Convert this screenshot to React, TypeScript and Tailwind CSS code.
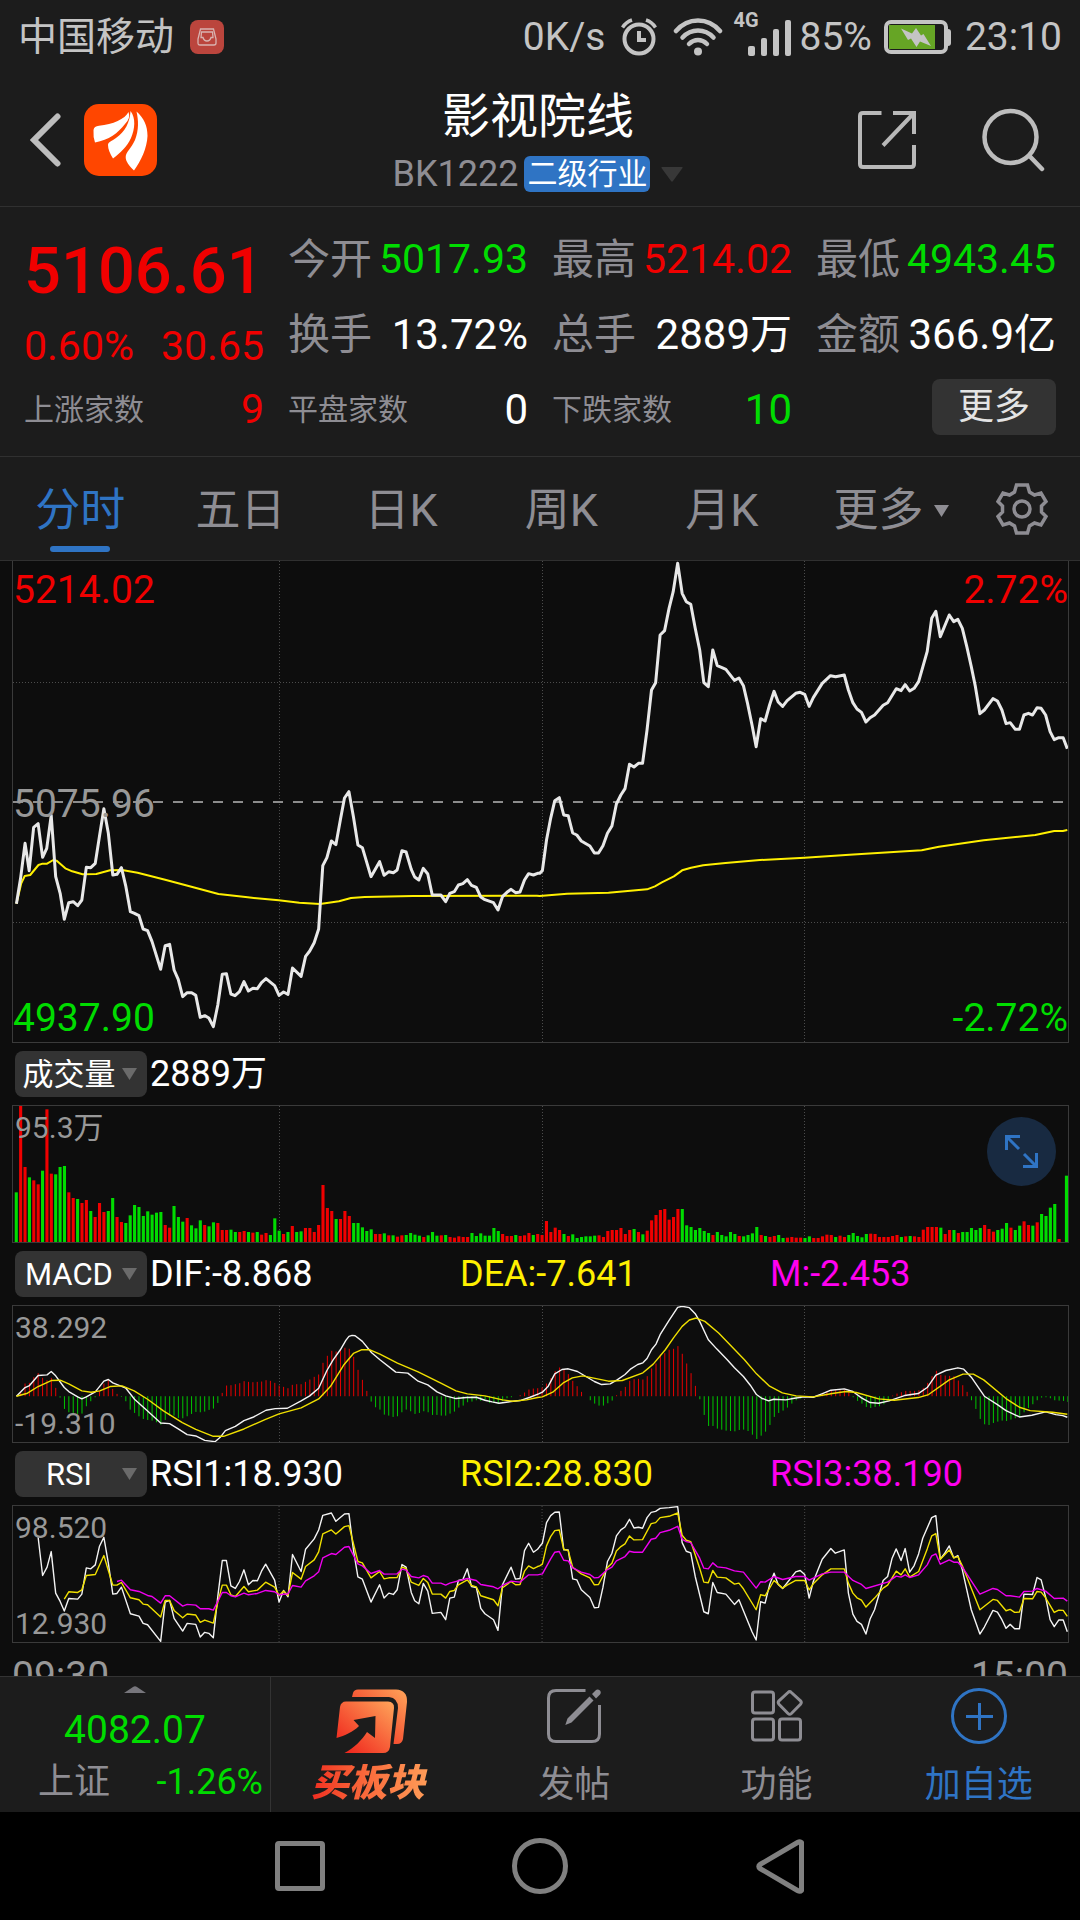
import type { ReactNode } from 'react'

// x distance between two one-minute samples, and the width of the morning session
const STEP = 12.73
const FIRST = 48
const SESSION = 1568
const GRID_X = [811, 1575, 2338]

// Morning and afternoon points are kept apart, the afternoon starts again at x = 0
function series(morning: string, afternoon: string) {
  const shifted = afternoon.split(' ').map((p) => {
    const [x, y] = p.split(',').map(Number)
    return `${x + SESSION},${y}`
  })
  return `${morning} ${shifted.join(' ')}`
}

const PRICE = series(
  '48,1061 60,985 73,880 85,962 98,832 111,821 124,922 136,895 149,796 162,980 175,1030 187,1108 200,1058 213,1055 226,1067 238,1050 251,952 264,953 277,940 289,860 302,776 315,850 328,975 340,973 353,953 366,1010 379,1085 391,1090 404,1097 416,1137 429,1142 442,1175 467,1258 480,1187 493,1183 506,1260 518,1288 531,1340 544,1328 557,1328 569,1336 582,1402 595,1397 607,1404 620,1430 633,1365 646,1273 658,1271 671,1332 683,1337 696,1325 709,1295 722,1323 735,1315 748,1316 760,1298 773,1286 798,1307 811,1336 824,1326 837,1333 850,1254 875,1279 888,1219 900,1203 913,1178 926,1137 938,947 950,923 963,873 976,884 989,810 1001,744 1014,725 1027,800 1040,885 1053,893 1078,980 1103,935 1116,976 1130,965 1143,968 1154,960 1168,902 1180,906 1195,958 1205,981 1217,990 1230,955 1243,972 1256,1035 1281,1035 1295,1055 1307,1030 1320,1025 1332,1005 1345,1001 1358,989 1370,1006 1384,1012 1397,1041 1409,1049 1434,1058 1447,1080 1460,1040 1473,1027 1485,1018 1498,1028 1511,1026 1524,990 1536,971 1550,975 1562,970',
  '0,970 8,962 20,870 32,805 44,752 57,743 70,795 83,797 96,849 108,855 121,873 146,888 159,909 171,909 184,887 197,850 210,828 223,762 236,735 248,716 261,643 274,651 287,640 299,640 312,540 325,420 337,398 350,255 363,242 376,175 388,125 401,40 414,130 426,155 439,163 452,235 465,300 477,398 490,410 503,300 516,347 528,352 541,358 566,391 579,384 592,407 604,460 617,525 629,590 642,506 655,513 668,465 681,424 693,456 706,469 719,452 744,430 757,427 770,433 783,469 795,443 821,400 845,377 860,380 885,375 897,420 910,458 922,477 935,487 948,516 960,503 973,495 998,466 1011,458 1036,416 1050,422 1062,404 1075,423 1088,415 1101,395 1126,304 1139,205 1151,184 1164,260 1190,195 1203,215 1215,208 1228,235 1241,290 1254,350 1266,410 1279,491 1292,480 1317,446 1330,453 1343,480 1355,521 1367,518 1382,538 1394,538 1407,495 1420,490 1432,495 1445,473 1457,475 1470,495 1483,545 1495,569 1508,563 1521,563 1533,596'
)

const AVERAGE = series(
  '48,1061 62,1000 72,978 88,975 112,945 124,941 137,941 155,930 165,932 190,955 210,964 240,973 280,972 320,961 355,960 400,968 480,989 540,1006 635,1032 720,1042 810,1051 870,1058 930,1062 985,1054 1020,1044 1060,1041 1200,1038 1560,1037',
  '0,1038 80,1031 200,1028 312,1018 335,1009 355,997 390,979 414,961 440,953 475,946 540,939 640,930 770,923 900,914 1110,901 1160,890 1290,871 1440,855 1495,843 1520,843 1533,840'
)

// r = up minute, g = down minute
const VOLUME =
  'g149 r408 r225 g194 r185 r173 g214 r398 r205 g203 g225 g228 r149 r132 g129 r117 r126 g93 r75 r117 r90 g93 g132 r75 r60 g57 g80 g111 g105 g78 g92 g82 g88 g90 r51 r43 g108 g75 g61 r72 g50 g41 g65 r51 g47 g59 r57 r36 r36 g37 g30 r30 r33 g30 r28 g30 r22 r27 g21 g71 g34 r24 g30 r48 g30 g32 r42 r42 r30 r51 r171 r102 r93 g69 r69 r93 r78 g57 g57 g44 g33 g38 r24 r24 g26 r20 g20 r16 r20 g21 g27 g22 g19 r15 g20 g30 g19 r20 g21 r15 r13 r17 r15 r15 g27 g18 g26 g19 g19 g42 g33 r24 r18 r18 g21 r18 r20 r27 g21 r24 ' +
  'r21 r63 r30 r43 r36 g24 r18 g23 g12 g15 g17 g17 g19 r20 r15 r33 r36 r36 r42 r24 r36 g39 r30 g23 r34 r65 r81 r96 r99 r67 r75 r99 g99 g50 g45 g36 g42 g33 g27 r21 g30 g21 g17 g30 g24 r18 g17 g21 g26 g45 r21 g18 r15 r18 g21 g12 r13 r15 r13 r13 g12 g17 r12 r12 r17 r22 r21 g15 r19 r15 g21 g27 g18 g14 g24 r25 r24 r15 r15 r15 r18 r21 g15 r17 g18 r17 r15 r37 r45 r45 r45 g43 r24 r36 g36 r27 g30 g30 g42 g36 g42 r51 r39 r31 g36 g40 g57 r43 g36 g49 r62 r51 g49 r59 g84 g78 g103 g114 r9 g0 g199'

const MACD_BARS = [
  0, 12, 38, 40, 57, 69, 55, 48, 55, 25, -4, -38, -48, -50, -53, -52, -30, -15, -3, 15, 38, 48, 22, 7, -2, -15, -40, -50, -60, -68,
  -71, -73, -78, -85, -71, -58, -58, -65, -66, -60, -53, -47, -48, -46, -41, -37, -20, 10, 32, 33, 36, 39, 45, 43, 42, 43, 44, 48, 46, 40,
  32, 28, 24, 34, 36, 36, 43, 50, 58, 65, 100, 121, 136, 134, 138, 145, 142, 118, 79, 49, 16, -16, -33, -40, -55, -58, -62, -60, -48, -40,
  -45, -53, -50, -45, -48, -56, -56, -58, -58, -52, -46, -34, -28, -18, -16, -12, -14, -12, -20, -20, -23, -15, -6, -3, 0, 3, 11, 20, 23, 24,
  26, 38, 54, 75, 86, 80, 66, 46, 30, 13, 0, -12, -22, -28, -28, -21, -13, 3, 16, 28, 46, 51, 52, 50, 60, 83, 98, 125, 129, 139,
  142, 150, 127, 98, 69, 31, -9, -56, -89, -89, -97, -100, -103, -104, -105, -101, -100, -104, -115, -128, -118, -106, -86, -62, -50, -43, -34, -22, -12, -7,
  -4, -3, -3, 4, 8, 13, 18, 18, 19, 20, 14, -3, -14, -22, -32, -35, -32, -30, -24, -15, 2, 8, 12, 16, 16, 16, 18, 25, 40, 60,
  76, 64, 62, 61, 60, 47, 33, 13, -12, -38, -68, -84, -86, -80, -76, -73, -74, -70, -66, -60, -48, -35, -24, -12, -4, -3, -6, -12, -13, -14, -17,
]

const DIF = series(
  '48,139 73,113 86,107 111,77 137,75 149,65 162,78 187,113 200,125 226,141 238,147 251,141 277,126 302,94 315,89 328,99 366,115 391,148 429,183 467,219 493,221 518,237 544,254 569,258 595,271 625,275 640,262 655,242 684,229 709,212 735,202 773,181 800,176 835,175 875,153 900,138 926,115 950,62 968,30 989,0 1005,-28 1014,-40 1023,-43 1032,-42 1053,-25 1080,9 1104,30 1150,67 1185,70 1215,94 1243,105 1270,126 1295,138 1325,146 1355,143 1384,142 1409,151 1430,156 1450,160 1485,155 1511,152 1540,142 1565,132',
  '8,127 25,109 44,72 65,59 83,57 110,65 159,95 180,104 205,102 225,90 248,74 265,57 285,44 300,39 312,26 325,0 338,-17 350,-45 376,-88 401,-127 414,-130 435,-126 452,-108 465,-85 490,-30 515,-2 545,30 566,54 592,80 612,106 630,134 645,145 665,153 680,148 715,150 740,145 768,141 795,142 820,132 846,121 885,117 910,125 935,144 960,158 985,160 1015,153 1060,137 1100,131 1126,113 1151,76 1180,62 1215,54 1232,58 1254,82 1292,139 1330,164 1355,182 1394,201 1430,196 1470,186 1500,194 1520,197 1533,202'
)

const DEA = series(
  '48,139 80,130 111,110 149,92 175,91 200,102 238,123 265,127 290,123 320,110 355,108 390,123 429,148 475,183 530,218 569,238 620,259 650,259 709,237 770,209 811,192 875,174 926,147 960,110 1000,44 1027,11 1050,0 1075,0 1104,13 1155,40 1215,66 1281,100 1325,123 1358,132 1409,138 1460,150 1490,154 1530,150 1562,143',
  '8,141 38,127 70,98 95,84 125,78 200,94 240,92 300,69 330,43 365,0 390,-37 414,-70 435,-89 455,-95 480,-85 520,-50 595,30 630,72 668,109 705,129 745,138 795,141 850,131 890,125 920,128 985,147 1030,151 1100,143 1130,134 1190,90 1230,73 1260,73 1290,90 1355,146 1394,172 1425,182 1490,187 1533,193'
)

const RSI1 = series(
  '111,562 124,677 137,652 149,605 162,730 175,755 187,784 200,746 226,748 238,733 251,654 264,657 277,645 289,590 302,562 315,640 328,733 340,731 353,712 379,792 404,799 416,821 429,825 467,875 480,757 493,752 506,806 531,844 544,821 569,824 582,862 595,848 607,851 620,864 633,740 646,632 658,632 671,708 684,716 696,695 709,660 722,705 735,692 748,693 760,664 772,643 798,691 811,757 824,722 837,741 850,614 875,665 888,598 913,567 926,540 938,496 963,489 976,514 1001,492 1014,491 1027,600 1040,681 1053,688 1078,757 1103,705 1116,745 1130,730 1143,734 1154,720 1168,644 1180,652 1195,728 1205,753 1217,762 1230,701 1243,724 1256,791 1281,788 1295,810 1307,745 1320,742 1332,692 1345,689 1358,657 1370,710 1384,713 1397,776 1409,792 1434,810 1447,842 1460,705 1485,652 1498,688 1511,686 1524,602 1536,580 1550,607 1562,598',
  '0,590 8,580 20,518 32,497 44,487 57,486 70,600 83,600 96,687 108,690 121,720 146,743 159,774 171,773 184,712 197,635 210,610 223,558 236,540 248,531 261,508 274,534 287,532 299,535 312,503 324,487 337,484 350,475 376,473 401,470 414,578 426,604 439,609 452,680 477,786 490,792 503,698 516,728 541,733 566,764 579,750 617,846 629,871 642,756 655,760 668,705 681,670 693,704 706,716 744,666 757,662 770,674 783,745 795,695 821,628 846,596 859,610 885,600 897,730 910,793 922,815 935,824 948,853 960,808 973,780 998,692 1011,680 1024,625 1036,597 1050,632 1062,596 1075,667 1088,647 1101,612 1113,565 1139,503 1151,497 1164,628 1177,610 1190,588 1203,624 1215,617 1228,660 1254,780 1279,853 1292,832 1317,782 1330,787 1343,810 1355,836 1367,824 1380,837 1394,837 1407,733 1432,734 1445,683 1457,690 1470,742 1483,810 1495,831 1508,811 1521,811 1533,846'
)

const RSI2 = series(
  '187,748 200,726 226,728 238,720 251,677 277,674 302,617 315,662 328,706 340,706 353,698 379,744 404,750 416,763 429,765 467,802 480,752 493,752 506,782 531,804 544,793 569,796 582,818 595,811 620,820 633,757 646,706 658,706 671,735 684,740 709,710 722,726 748,721 772,697 798,712 811,737 824,724 837,737 850,668 875,688 888,650 913,630 926,606 938,552 963,540 976,552 1001,530 1014,527 1040,635 1053,639 1078,684 1103,665 1116,687 1130,684 1154,683 1168,652 1180,656 1195,697 1217,707 1230,686 1243,698 1256,733 1281,733 1295,745 1307,725 1320,722 1332,705 1358,690 1370,707 1384,711 1397,738 1434,750 1447,768 1460,714 1485,695 1498,705 1511,704 1524,664 1536,648 1550,656 1562,650',
  '0,648 8,643 20,588 32,560 44,542 57,540 70,598 83,602 96,652 121,672 146,684 159,705 171,704 197,653 210,640 223,603 236,590 248,582 261,558 274,570 299,569 324,521 337,518 350,503 376,499 401,489 414,556 426,571 439,575 465,655 477,697 490,699 503,662 516,682 541,684 566,703 579,700 592,717 629,780 642,735 655,738 681,692 706,715 719,706 744,692 770,692 783,720 795,702 821,675 846,657 885,657 897,700 910,730 922,744 935,751 948,772 973,745 998,715 1011,706 1036,664 1050,675 1062,657 1075,682 1101,665 1126,597 1139,558 1151,551 1164,628 1190,600 1203,624 1215,620 1228,648 1279,780 1317,749 1330,752 1355,783 1367,779 1380,788 1394,787 1407,746 1432,747 1445,725 1457,727 1470,744 1495,788 1508,781 1521,782 1533,800'
)

const RSI3 = series(
  '340,695 353,691 379,720 404,725 429,737 442,740 467,760 480,738 493,738 531,769 544,764 569,766 582,777 607,777 620,781 646,728 658,728 671,738 684,741 709,730 722,735 748,731 772,722 798,726 811,735 837,732 850,707 875,712 888,693 913,678 926,666 938,624 963,611 976,614 1001,592 1014,590 1040,642 1053,648 1078,671 1103,662 1116,673 1154,672 1168,658 1180,661 1195,680 1217,684 1230,677 1243,681 1256,700 1281,700 1295,706 1307,700 1358,686 1384,692 1397,704 1434,711 1447,717 1460,707 1485,694 1511,697 1536,675 1562,675',
  '8,672 32,627 44,607 57,605 70,631 83,633 96,654 121,667 146,674 159,684 171,683 197,659 210,652 223,633 248,620 261,604 274,607 299,607 324,568 337,565 350,548 376,541 401,529 414,568 426,575 439,578 465,625 477,655 490,657 503,639 516,651 541,654 566,663 592,667 629,715 642,696 655,697 681,680 706,689 744,680 770,680 783,691 821,672 846,667 885,667 910,692 935,704 948,716 1011,697 1036,679 1050,682 1062,675 1075,683 1101,675 1126,645 1139,618 1151,612 1164,643 1190,630 1203,637 1215,637 1228,652 1279,733 1317,716 1330,719 1355,738 1367,738 1394,742 1407,725 1432,724 1445,716 1470,724 1495,746 1521,745 1533,754'
)

const TABS = ['分时', '五日', '日K', '周K', '月K']

function Line({ points, color, width = 1.4 }: { points: string; color: string; width?: number }) {
  return (
    <polyline
      points={points}
      fill="none"
      stroke={color}
      strokeWidth={width}
      strokeLinejoin="round"
      vectorEffect="non-scaling-stroke"
    />
  )
}

function GridLine({ x1, x2, y1, y2 }: { x1: number; x2: number; y1: number; y2: number }) {
  return (
    <line
      x1={x1}
      x2={x2}
      y1={y1}
      y2={y2}
      stroke="#4c4c4c"
      strokeDasharray="1 2"
      shapeRendering="crispEdges"
      vectorEffect="non-scaling-stroke"
    />
  )
}

function Plot({ top, height, children }: { top: number; height: number; children: ReactNode }) {
  return (
    <svg className="block h-full w-full" viewBox={`38 ${top} 3065 ${height}`} preserveAspectRatio="none" aria-hidden="true">
      {GRID_X.map((x) => (
        <GridLine key={x} x1={x} x2={x} y1={top} y2={top + height} />
      ))}
      {children}
    </svg>
  )
}

type Reading = { text: string; color: string }

function IndicatorBar({ name, options, readings }: { name: string; options: string[]; readings: Reading[] }) {
  return (
    <div className="flex h-[62px] items-center gap-[3px] pl-[15px]">
      <div className="relative">
        <select
          aria-label={`指标 ${name}`}
          defaultValue={name}
          className="block h-[46px] w-[132px] appearance-none rounded-lg bg-[#333333] pr-7 pl-1 text-[31px] leading-none text-white [text-align-last:center]"
        >
          {options.map((o) => (
            <option key={o}>{o}</option>
          ))}
        </select>
        <svg className="pointer-events-none absolute top-[17px] right-2.5 h-3 w-[15px]" viewBox="0 0 15 12">
          <path d="M0 0H15L7.500 12Z" fill="#6b6b6b" />
        </svg>
      </div>
      <div className="grid flex-1 grid-cols-3 text-[36px] leading-none">
        {readings.map((r) => (
          <span key={r.text} className={r.color}>
            {r.text}
          </span>
        ))}
      </div>
    </div>
  )
}

function Quote({ label, value, color, small }: { label: string; value: string; color: string; small?: boolean }) {
  return (
    <div className="flex h-[75px] items-center justify-between whitespace-nowrap">
      <span className={small ? 'text-[30px] text-[#8e8d93]' : 'text-[42px] text-[#8e8d93]'}>{label}</span>
      <span className={color}>{value}</span>
    </div>
  )
}

function StatusBar() {
  return (
    <div className="flex h-[74px] items-center justify-between px-[18px] text-[39px] leading-none text-[#c4c4c4]">
      <div className="flex items-center gap-4">
        <span>中国移动</span>
        <span className="flex size-[34px] items-center justify-center rounded-lg bg-[#bb453d]">
          <svg className="h-[18px] w-5" viewBox="0 0 20 18" fill="none" stroke="#d9b3b0" strokeWidth="1.300">
            <path d="M3.500 1H16.500L19 11V15Q19 17 17 17H3Q1 17 1 15V11Z" />
            <path d="M4.500 4H15.500L16 9.500H14Q13 13 10 13T6 9.500H4Z" />
          </svg>
        </span>
      </div>
      <div className="flex items-center">
        <span className="mr-4">0K/s</span>
        <svg className="mr-4 h-[38px] w-9" viewBox="0 0 36 38" fill="none" stroke="#c4c4c4" strokeWidth="4">
          <circle cx="18" cy="21" r="14.500" />
          <path d="M18 13V22H25" />
          <path d="M1.500 9.500Q5 4 11 2M34.500 9.500Q31 4 25 2" strokeWidth="3.500" />
        </svg>
        <svg className="mr-2.5 h-[38px] w-[50px]" viewBox="0 0 50 38" fill="none" stroke="#c4c4c4" strokeWidth="4.500" strokeLinecap="round">
          <path d="M3 13Q12 2.500 25 2.500T47 13" />
          <path d="M9.500 19.500Q16 12.500 25 12.500T40.500 19.500" />
          <path d="M16 26Q20 22 25 22T34 26" />
          <circle cx="25" cy="33.500" r="4" fill="#c4c4c4" stroke="none" />
        </svg>
        <div className="relative mr-2 h-[38px] w-[58px]">
          <span className="absolute -top-2 left-0 text-[20px] leading-none font-bold">4G</span>
          <svg className="absolute right-0 bottom-0 h-[38px] w-[43px]" viewBox="0 0 43 38" fill="#c4c4c4">
            <rect x="0" y="28" width="7" height="10" rx="2" />
            <rect x="13" y="20" width="6" height="18" rx="2" />
            <rect x="25" y="11" width="6" height="27" rx="2" />
            <rect x="37" y="2" width="6" height="36" rx="2" />
          </svg>
        </div>
        <span className="mr-3">85%</span>
        <svg className="mr-3.5 h-[34px] w-[67px]" viewBox="0 0 67 34">
          <rect x="2" y="2" width="60" height="30" rx="5" fill="none" stroke="#c4c4c4" strokeWidth="4" />
          <path d="M64 9Q67 9 67 12V23Q67 26 64 26Z" fill="#c4c4c4" />
          <rect x="5" y="5" width="46" height="24" fill="#66a525" />
          <path d="M17 8.500L28 13.500L32 8L37 15.500L39.500 14L47 26L36 21.500L32.500 27L27 18.500L24 20Z" fill="#c4c4c4" />
        </svg>
        <span>23:10</span>
      </div>
    </div>
  )
}

function Header() {
  return (
    <header className="grid h-[133px] grid-cols-[1fr_auto_1fr] items-center border-b border-[#303030] pr-[34px] pl-[30px]">
      <div className="flex items-center gap-[23px]">
        <button aria-label="返回">
          <svg className="h-[54px] w-[31px]" viewBox="0 0 31 54" fill="none" stroke="#bdbdbd" strokeWidth="6" strokeLinecap="round">
            <path d="M27.500 3.500L4 27L27.500 50.500" />
          </svg>
        </button>
        <a href="#home" aria-label="首页">
          <svg className="h-[72px] w-[73px]" viewBox="0 0 73 72">
            <rect width="73" height="72" rx="15" fill="#ff4600" />
            <g fill="#ffffff">
              <path d="M9.500 26Q10 22 15 21.700C29 20.500 41 15 44.500 8Q47 14 41 20C34 29 25 36 11 38.500Q9 33 9.500 26Z" />
              <path d="M24 41C24 38 28 37 32 34C41 28 46 18 46.500 7C52 14 51 25 47 34C43 43 36 49 29 54.500C26 50 24 45 24 41Z" />
              <path d="M52.500 7.500C60 14 63.500 22 63.500 32C63 44 57 57 50 66.500C45 62 41.500 57 41.700 53C41.700 48 47 45 51 36C55 26 54.500 16 52.500 7.500Z" />
            </g>
          </svg>
        </a>
      </div>
      <div className="flex flex-col items-center gap-0.5 pt-0.5">
        <h1 className="text-[48px] leading-[64px] text-white">影视院线</h1>
        <button className="flex h-[46px] items-center text-[36px] leading-none text-[#8e8d93]">
          BK1222
          <span className="ml-1.5 flex h-9 items-center rounded-md bg-[#2f74c4] px-[3px] text-[30px] leading-none text-white">
            二级行业
          </span>
          <svg className="ml-[11px] h-[15px] w-[22px]" viewBox="0 0 22 15">
            <path d="M1 0H21Q22 0 21.500 1L12 14Q11 15.500 10 14L.5 1Q0 0 1 0Z" fill="#383838" />
          </svg>
        </button>
      </div>
      <div className="flex items-center justify-end gap-[66px]">
        <button aria-label="分享">
          <svg className="h-[58px] w-[58px]" viewBox="0 0 58 58" fill="none" stroke="#b8b8b8" strokeWidth="4">
            <path d="M23.500 2H5Q2 2 2 5V53Q2 56 5 56H53Q56 56 56 53V34" />
            <path d="M35 2H56V23M56 2L25 34.500" />
          </svg>
        </button>
        <button aria-label="搜索">
          <svg className="h-[64px] w-[64px]" viewBox="0 0 64 64" fill="none" stroke="#bdbdbd" strokeWidth="4.500" strokeLinecap="round">
            <circle cx="28.500" cy="29" r="26" />
            <path d="M47.500 48L60 61" />
          </svg>
        </button>
      </div>
    </header>
  )
}

function Summary() {
  return (
    <section className="grid grid-cols-4 gap-x-6 border-b border-[#303030] px-6 pt-[15px] pb-[9px] leading-none">
      <div>
        <div className="flex h-[98px] items-center text-[65px] font-medium text-[#f00000]">5106.61</div>
        <div className="flex h-[52px] items-center justify-between text-[41px] text-[#f00000]">
          <span>0.60%</span>
          <span>30.65</span>
        </div>
        <Quote label="上涨家数" value="9" color="text-[41px] text-[#f00000]" small />
      </div>
      <div>
        <Quote label="今开" value="5017.93" color="text-[41px] text-[#00dc00]" />
        <Quote label="换手" value="13.72%" color="text-[42px] text-white" />
        <Quote label="平盘家数" value="0" color="text-[42px] text-white" small />
      </div>
      <div>
        <Quote label="最高" value="5214.02" color="text-[41px] text-[#f00000]" />
        <Quote label="总手" value="2889万" color="text-[42px] text-white" />
        <Quote label="下跌家数" value="10" color="text-[42px] text-[#00dc00]" small />
      </div>
      <div>
        <Quote label="最低" value="4943.45" color="text-[41px] text-[#00dc00]" />
        <Quote label="金额" value="366.9亿" color="text-[42px] text-white" />
        <div className="flex h-[75px] items-start justify-end pt-[7px]">
          <button className="h-14 w-[124px] rounded-lg bg-[#333333] text-[36px] leading-none text-[#e4e4e4]">更多</button>
        </div>
      </div>
    </section>
  )
}

function Tabs() {
  return (
    <nav className="flex h-[104px] items-stretch border-b border-[#303030] pr-[17px] text-[45px] leading-none text-[#8e8d93]">
      {TABS.map((tab, i) => (
        <button key={tab} className={`relative flex-1 pt-1 ${i === 0 ? 'text-[#2f74c4]' : ''}`}>
          {tab}
          {i === 0 && <span className="absolute bottom-2 left-1/2 h-1.5 w-[60px] -translate-x-1/2 rounded-full bg-[#2f74c4]" />}
        </button>
      ))}
      <button className="flex w-[178px] items-center justify-center gap-2.5 pt-1">
        更多
        <svg className="h-3 w-[15px]" viewBox="0 0 15 12">
          <path d="M0 0H15L7.500 12Z" fill="#8e8d93" />
        </svg>
      </button>
      <button aria-label="设置" className="flex w-[83px] items-center justify-center">
        <svg className="size-[52px]" viewBox="0 0 52 52" fill="none" stroke="#8e8d93" strokeWidth="3.500">
          <path d="M20.500 2H31.500L33.500 9L38.500 12L45 10L50 18.500L45.500 23V29L50 33.500L45 42L38.500 40L33.500 43L31.500 50H20.500L18.500 43L13.500 40L7 42L2 33.500L6.500 29V23L2 18.500L7 10L13.500 12L18.500 9Z" />
          <circle cx="26" cy="26" r="8" />
        </svg>
      </button>
    </nav>
  )
}

function Charts() {
  return (
    <main className="bg-[#0d0d0d]">
      <div className="relative mr-[11px] ml-3 h-[482px] border-x border-b border-[#3a3a3a] text-[39px] leading-none">
        <Plot top={33} height={1443}>
          <GridLine x1={38} x2={3103} y1={397} y2={397} />
          <GridLine x1={38} x2={3103} y1={1117} y2={1117} />
          <line x1="38" x2="3103" y1="756" y2="756" stroke="#8c8c8c" strokeWidth="2" strokeDasharray="10 10" vectorEffect="non-scaling-stroke" />
          <Line points={AVERAGE} color="#fff000" width={2} />
          <Line points={PRICE} color="#e8e8e8" width={3} />
        </Plot>
        <span className="absolute top-2.5 left-0 text-[#f00000]">5214.02</span>
        <span className="absolute top-56 left-0 text-[#989898]">5075.96</span>
        <span className="absolute bottom-1 left-0 text-[#00dc00]">4937.90</span>
        <span className="absolute top-2.5 right-0 text-[#f00000]">2.72%</span>
        <span className="absolute right-0 bottom-1 text-[#00dc00]">-2.72%</span>
      </div>

      <IndicatorBar name="成交量" options={['成交量', '成交额']} readings={[{ text: '2889万', color: 'text-white' }]} />
      <div className="relative mr-[11px] ml-3 h-[138px] border border-[#3a3a3a] text-[30px] leading-none text-[#989898]">
        <Plot top={198} height={408}>
          {VOLUME.split(' ').map((bar, i) => {
            const h = Number(bar.slice(1))
            // the closing bar is kept inside the frame
            const x = Math.min(FIRST + i * STEP - 5, 3094)
            return <rect key={i} x={x} y={606 - h} width="9" height={h} fill={bar[0] === 'r' ? '#f00000' : '#00dc00'} />
          })}
        </Plot>
        <span className="absolute top-[7px] left-0.5">95.3万</span>
        <button aria-label="全屏" className="absolute top-[11px] right-3 flex size-[69px] items-center justify-center rounded-full bg-[#182a41]">
          <svg className="size-[33px]" viewBox="0 0 33 33" fill="none" stroke="#2f74c4" strokeWidth="3">
            <path d="M1.500 15V1.500H15M1.500 1.500L14 14" />
            <path d="M31.500 18V31.500H18M31.500 31.500L19 19" />
          </svg>
        </button>
      </div>

      <IndicatorBar
        name="MACD"
        options={['MACD', 'KDJ', 'BOLL']}
        readings={[
          { text: 'DIF:-8.868', color: 'text-white' },
          { text: 'DEA:-7.641', color: 'text-[#fff000]' },
          { text: 'M:-2.453', color: 'text-[#ff00f0]' },
        ]}
      />
      <div className="relative mr-[11px] ml-3 h-[138px] border border-[#3a3a3a] text-[30px] leading-none text-[#989898]">
        <Plot top={-131} height={407}>
          {MACD_BARS.map((v, i) => (
            <rect
              key={i}
              x={FIRST + i * STEP - 2}
              y={v > 0 ? 139 - v : 139}
              width="3"
              height={Math.abs(v)}
              fill={v > 0 ? '#e00000' : '#00c000'}
            />
          ))}
          <Line points={DIF} color="#f4f4f4" />
          <Line points={DEA} color="#f0e000" />
        </Plot>
        <span className="absolute top-[7px] left-0.5">38.292</span>
        <span className="absolute bottom-[3px] left-0.5">-19.310</span>
      </div>

      <IndicatorBar
        name="RSI"
        options={['RSI', 'WR', 'CCI']}
        readings={[
          { text: 'RSI1:18.930', color: 'text-white' },
          { text: 'RSI2:28.830', color: 'text-[#fff000]' },
          { text: 'RSI3:38.190', color: 'text-[#ff00f0]' },
        ]}
      />
      <div className="relative mr-[11px] ml-3 h-[138px] border border-[#3a3a3a] text-[30px] leading-none text-[#989898]">
        <Plot top={468} height={409}>
          <Line points={RSI1} color="#f4f4f4" />
          <Line points={RSI2} color="#f0e000" />
          <Line points={RSI3} color="#f000f0" />
        </Plot>
        <span className="absolute top-[7px] left-0.5">98.520</span>
        <span className="absolute bottom-[3px] left-0.5">12.930</span>
      </div>

      <div className="flex h-[33px] justify-between overflow-hidden px-3 pt-3.5 text-[39px] leading-none text-[#989898]">
        <span>09:30</span>
        <span>15:00</span>
      </div>
    </main>
  )
}

function Action({ label, color, children }: { label: string; color: string; children: ReactNode }) {
  return (
    <button className={`flex flex-1 flex-col items-center pt-2.5 text-[36px] leading-none ${color}`}>
      <span className="flex h-[58px] items-center">{children}</span>
      <span className="mt-[22px]">{label}</span>
    </button>
  )
}

function BottomBar() {
  return (
    <footer className="flex h-[136px] border-t border-[#333333]">
      <button className="flex w-[271px] flex-col items-center border-r border-[#333333] leading-none">
        <svg className="mt-[9px] h-[7px] w-[22px]" viewBox="0 0 22 7">
          <path d="M0 7L9 1Q11 -.5 13 1L22 7Z" fill="#77767c" />
        </svg>
        <span className="mt-[18px] text-[39px] text-[#00dc00]">4082.07</span>
        <span className="mt-3.5 flex w-full items-center justify-between pr-[7px] pl-[38px] text-[36px]">
          <span className="text-[#8e8d93]">上证</span>
          <span className="text-[#00dc00]">-1.26%</span>
        </span>
      </button>
      <button className="flex flex-1 flex-col items-center pt-3 text-[38px] leading-none">
        <svg className="h-[66px] w-[72px]" viewBox="0 0 72 66">
          <defs>
            <linearGradient id="buy" x1="0" y1="1" x2="1" y2="0">
              <stop offset="0.1" stopColor="#f0281e" />
              <stop offset="1" stopColor="#ffa55a" />
            </linearGradient>
          </defs>
          <g fill="url(#buy)">
            <path d="M16 8L17 4Q18 .5 22 .5H60Q71.500 1 71 13L67 50Q66 55 61 55H57.500L62 19Q62 9 53 8Z" />
            <path d="M4 18Q5 12.500 10 12.500H52Q58.500 13 58 19L54 58Q53 64 47 64H8.500C18 59 26 51 31 43L39 49L39.500 27L17.500 31L23 37C17 43 9 46.500 .5 49Z" />
          </g>
        </svg>
        <span className="mt-[9px] bg-linear-to-r from-[#f02a20] to-[#ffa05a] bg-clip-text pr-2 font-black text-transparent italic">
          买板块
        </span>
      </button>
      <Action label="发帖" color="text-[#8e8d93]">
        <svg className="size-[54px]" viewBox="0 0 54 54" fill="none" stroke="currentColor" strokeWidth="3">
          <path d="M38.500 1.500H9Q1.500 1.500 1.500 9V45Q1.500 52.500 9 52.500H45Q52.500 52.500 52.500 45V16" />
          <path d="M18.300 36L20.500 29.500L42.500 7.500L46.500 11.500L24.500 33.500ZM45 5L48.500 1.500Q50.500 -.5 53 1.500Q54.500 3.500 53 5.500L49 9.500Z" fill="currentColor" stroke="none" />
        </svg>
      </Action>
      <Action label="功能" color="text-[#8e8d93]">
        <svg className="size-[52px]" viewBox="0 0 52 52" fill="none" stroke="currentColor" strokeWidth="3">
          <rect x="1.500" y="2" width="21" height="21" rx="2.500" />
          <rect x="1.500" y="29" width="21" height="21" rx="2.500" />
          <rect x="28.500" y="29" width="21" height="21" rx="2.500" />
          <path d="M37 2.500Q38.700 .8 40.400 2.500L49.500 10.800Q51 12.500 49.500 14.200L40.400 23.500Q38.700 25 37 23.500L28 14.200Q26.500 12.500 28 10.800Z" />
        </svg>
      </Action>
      <Action label="加自选" color="text-[#2f74c4]">
        <svg className="size-[56px]" viewBox="0 0 56 56" fill="none" stroke="currentColor" strokeWidth="3">
          <circle cx="28" cy="28" r="26.500" />
          <path d="M15 28.500H42M28.500 15V42" />
        </svg>
      </Action>
    </footer>
  )
}

function SystemNav() {
  return (
    <div className="flex h-[108px] justify-center bg-black">
      <button aria-label="最近任务" className="flex w-60 items-center justify-center">
        <span className="size-[50px] rounded-sm border-5 border-[#808080]" />
      </button>
      <button aria-label="主屏幕" className="flex w-60 items-center justify-center">
        <span className="size-14 rounded-full border-5 border-[#808080]" />
      </button>
      <button aria-label="后退" className="flex w-60 items-center justify-center">
        <svg className="h-[55px] w-12" viewBox="0 0 48 55" fill="none" stroke="#808080" strokeWidth="5" strokeLinejoin="round">
          <path d="M45.500 3.500V51.500Q44 53 41.500 51.500L4 29.500Q1.500 27.500 4 25.500L41.500 3.500Q44 2 45.500 3.500Z" />
        </svg>
      </button>
    </div>
  )
}

export default function App() {
  return (
    <div className="flex min-h-screen flex-col bg-[#1c1c1c] font-['Roboto','Noto_Sans_CJK_SC',sans-serif]">
      <StatusBar />
      <Header />
      <Summary />
      <Tabs />
      <Charts />
      <BottomBar />
      <SystemNav />
    </div>
  )
}
